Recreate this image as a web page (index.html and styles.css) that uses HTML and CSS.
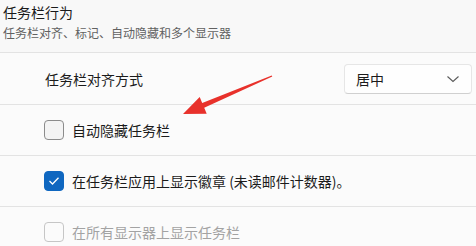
FILE: index.html
```html
<!DOCTYPE html>
<html>
<head>
<meta charset="utf-8">
<link rel="stylesheet" href="styles.css">
</head>
<body>
<div class="page">
  <div class="header">
    <div class="title">任务栏行为</div>
    <div class="subtitle">任务栏对齐、标记、自动隐藏和多个显示器</div>
  </div>
  <div class="row row-align">
    <span class="label">任务栏对齐方式</span>
    <div class="select">
      <span>居中</span>
      <svg class="chev" width="14" height="8" viewBox="0 0 14 8"><path d="M1.5 1.5 L7 6.5 L12.5 1.5" fill="none" stroke="#5a5a5a" stroke-width="1.1"/></svg>
    </div>
  </div>
  <div class="row">
    <span class="box"></span>
    <span class="label">自动隐藏任务栏</span>
  </div>
  <div class="row">
    <span class="box checked"><svg width="12" height="10" viewBox="0 0 12 10"><path d="M1.5 5 L4.5 8 L10.5 1.8" fill="none" stroke="#fff" stroke-width="1.3"/></svg></span>
    <span class="label">在任务栏应用上显示徽章 (未读邮件计数器)。</span>
  </div>
  <div class="row">
    <span class="box disabled"></span>
    <span class="label dim">在所有显示器上显示任务栏</span>
  </div>
  <svg class="arrow" width="476" height="246" viewBox="0 0 476 246">
    <polygon points="272.3,76.6 204.2,107.7 206.7,113.7 183,114 199.7,97.1 202.2,103.1 271.7,75.4" fill="#e8312b"/>
  </svg>
</div>
</body>
</html>
```
FILE: styles.css
```css
html, body {
  margin: 0;
  padding: 0;
}
body {
  background: #fafafa;
  font-family: "Noto Sans CJK SC", "Noto Sans", sans-serif;
  color: #1b1b1b;
  width: 476px;
  height: 246px;
  overflow: hidden;
}
.page {
  position: relative;
  width: 476px;
  height: 246px;
  overflow: hidden;
}
.header {
  height: 52px;
  padding-left: 3px;
  box-sizing: border-box;
  padding-top: 2px;
  background: #f8f8f8;
}
.title {
  font-size: 14px;
  line-height: 20px;
  color: #1a1a1a;
}
.subtitle {
  font-size: 12px;
  line-height: 19px;
  padding-top: 1px;
  color: #616161;
}
.row {
  display: flex;
  align-items: center;
  height: 50px;
  border-top: 1px solid #e3e3e3;
  padding-left: 44px;
  background: #fbfbfb;
}
.row-align {
  height: 51px;
  padding-left: 45px;
  padding-right: 4px;
}
.label {
  font-size: 14px;
  line-height: 20px;
  color: #1b1b1b;
}
.dim {
  color: #a3a3a3;
}
.select {
  margin-left: auto;
  width: 128px;
  height: 30px;
  box-sizing: border-box;
  border: 1px solid #e6e6e6;
  border-bottom-color: #d0d0d0;
  border-radius: 4px;
  background: #fefefe;
  display: flex;
  align-items: center;
  justify-content: space-between;
  padding: 0 11px 0 11px;
  font-size: 14px;
  color: #1b1b1b;
}
.chev {
  display: block;
}
.box {
  width: 20px;
  height: 20px;
  box-sizing: border-box;
  border: 1px solid #8c8c8c;
  border-radius: 4px;
  background: #f4f4f4;
  margin-right: 8px;
  display: flex;
  align-items: center;
  justify-content: center;
  flex: none;
}
.box.checked {
  background: #0f67c0;
  border-color: #0f67c0;
}
.box.disabled {
  border-color: #c6c6c6;
  background: #fbfbfb;
}
.arrow {
  position: absolute;
  left: 0;
  top: 0;
  pointer-events: none;
}
```
